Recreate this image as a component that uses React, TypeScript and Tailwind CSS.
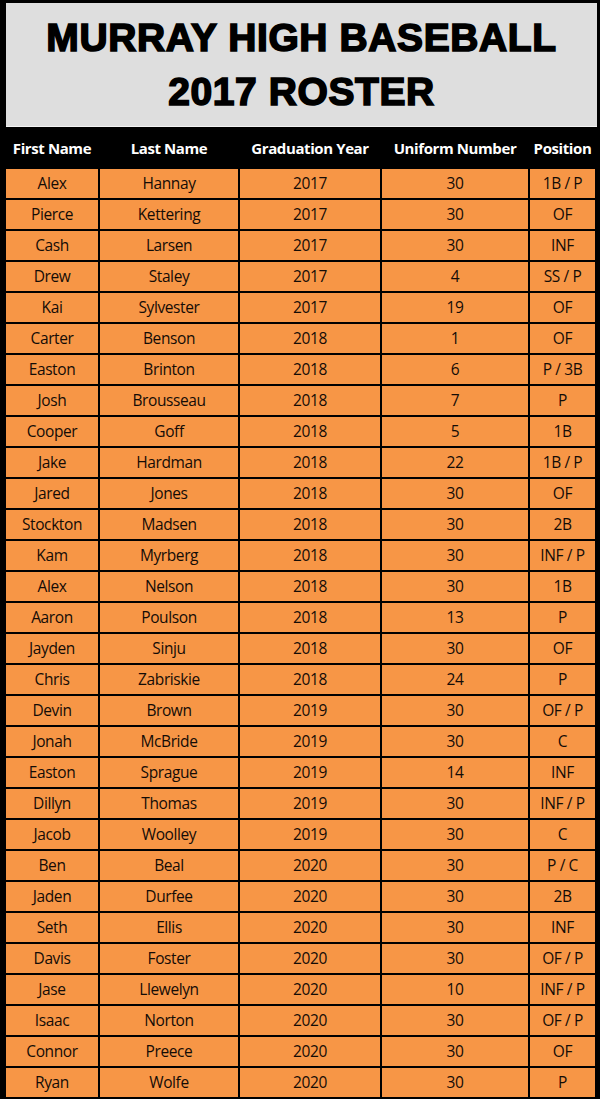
const players: [string, string, number, number, string][] = [
  ["Alex", "Hannay", 2017, 30, "1B / P"],
  ["Pierce", "Kettering", 2017, 30, "OF"],
  ["Cash", "Larsen", 2017, 30, "INF"],
  ["Drew", "Staley", 2017, 4, "SS / P"],
  ["Kai", "Sylvester", 2017, 19, "OF"],
  ["Carter", "Benson", 2018, 1, "OF"],
  ["Easton", "Brinton", 2018, 6, "P / 3B"],
  ["Josh", "Brousseau", 2018, 7, "P"],
  ["Cooper", "Goff", 2018, 5, "1B"],
  ["Jake", "Hardman", 2018, 22, "1B / P"],
  ["Jared", "Jones", 2018, 30, "OF"],
  ["Stockton", "Madsen", 2018, 30, "2B"],
  ["Kam", "Myrberg", 2018, 30, "INF / P"],
  ["Alex", "Nelson", 2018, 30, "1B"],
  ["Aaron", "Poulson", 2018, 13, "P"],
  ["Jayden", "Sinju", 2018, 30, "OF"],
  ["Chris", "Zabriskie", 2018, 24, "P"],
  ["Devin", "Brown", 2019, 30, "OF / P"],
  ["Jonah", "McBride", 2019, 30, "C"],
  ["Easton", "Sprague", 2019, 14, "INF"],
  ["Dillyn", "Thomas", 2019, 30, "INF / P"],
  ["Jacob", "Woolley", 2019, 30, "C"],
  ["Ben", "Beal", 2020, 30, "P / C"],
  ["Jaden", "Durfee", 2020, 30, "2B"],
  ["Seth", "Ellis", 2020, 30, "INF"],
  ["Davis", "Foster", 2020, 30, "OF / P"],
  ["Jase", "Llewelyn", 2020, 10, "INF / P"],
  ["Isaac", "Norton", 2020, 30, "OF / P"],
  ["Connor", "Preece", 2020, 30, "OF"],
  ["Ryan", "Wolfe", 2020, 30, "P"],
];

const headers = ["First Name", "Last Name", "Graduation Year", "Uniform Number", "Position"];
const cols = "grid grid-cols-[92px_138px_140px_146px_65px] gap-x-[2px]";

export default function App() {
  return (
    <div className="w-[600px] h-[1104px] bg-white">
      <div className="bg-black pl-[6px] pr-[3px] pt-[3px] pb-[2px]">
        {/* Title */}
        <div className="h-[123px] bg-[#dedede] flex flex-col items-center justify-center font-['Liberation_Sans',sans-serif] font-bold text-[39px] leading-[54px] text-black [-webkit-text-stroke:1.6px_black] tracking-[0.6px]">
          <div>MURRAY HIGH BASEBALL</div>
          <div>2017 ROSTER</div>
        </div>
        <div className="h-[1px] bg-[#f4f4f4]" />

        {/* Header */}
        <div className={`${cols} h-[42px] items-center font-['Open_Sans',sans-serif] font-bold text-white text-[15px] tracking-[-0.4px]`}>
          {headers.map((h) => (
            <div key={h} className="text-center whitespace-nowrap">{h}</div>
          ))}
        </div>

        {/* Rows */}
        <div className="flex flex-col gap-y-[2px]">
          {players.map((p, i) => (
            <div key={i} className={`${cols} h-[29px] font-['Open_Sans',sans-serif] text-[15.5px] text-[#140c06] tracking-[-0.4px]`}>
              {p.map((v, j) => (
                <div key={j} className="bg-[#f79646] flex items-center justify-center whitespace-nowrap">{v}</div>
              ))}
            </div>
          ))}
        </div>
      </div>
    </div>
  );
}
